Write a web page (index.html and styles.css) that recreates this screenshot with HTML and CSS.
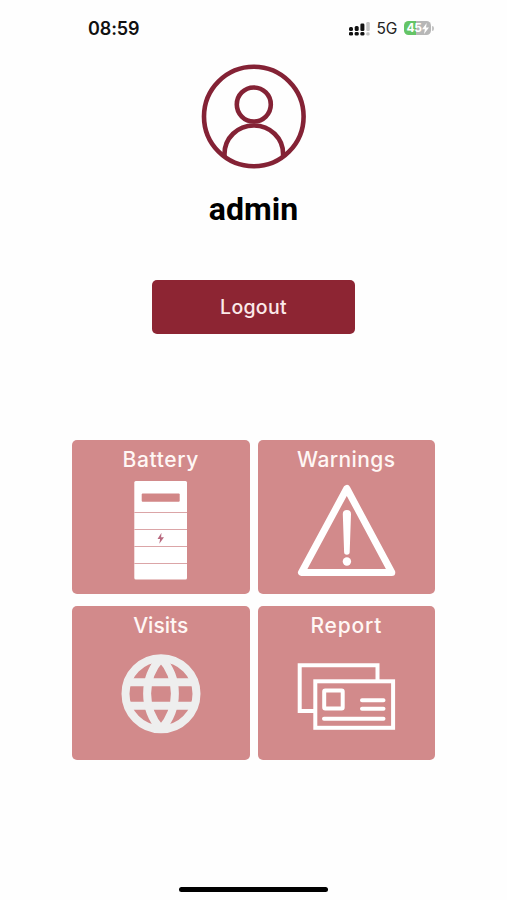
FILE: index.html
```html
<!DOCTYPE html>
<html lang="en">
<head>
<meta charset="utf-8">
<meta name="viewport" content="width=device-width, initial-scale=1">
<title>Account</title>
<link rel="stylesheet" href="styles.css">
</head>
<body>
<div class="screen">
  <header class="status">
    <span class="time">08:59</span>
    <div class="indicators">
      <svg class="signal" width="21" height="14" viewBox="0 0 21 14">
        <rect x="0" y="5" width="4" height="4" rx="1.5"/>
        <rect x="5.7" y="4" width="4" height="5" rx="1.5"/>
        <rect x="11.4" y="1.5" width="4" height="7.5" rx="1.3"/>
        <rect class="dim" x="17.3" y="0" width="3.5" height="9" rx="1.2"/>
        <rect x="0" y="10" width="4" height="3.6" rx="1.3"/>
        <rect x="5.7" y="10" width="4" height="3.6" rx="1.3"/>
        <rect x="11.4" y="10" width="4" height="3.6" rx="1.3"/>
        <rect class="dim" x="17.3" y="10.2" width="3.3" height="3.3" rx="1.2"/>
      </svg>
      <span class="network">5G</span>
      <div class="charge">
        <span class="level">45</span>
        <svg width="7" height="11" viewBox="0 0 7 11"><path d="M4.7 0 0 6.2h2.9L2 11l5-6.600H4z" fill="#fff"/></svg>
      </div>
      <i class="cap"></i>
    </div>
  </header>

  <main>
    <svg class="avatar" width="106" height="106" viewBox="0 0 106 106">
      <circle cx="52.800" cy="52.500" r="49.800"/>
      <circle cx="52.800" cy="40.500" r="17"/>
      <path d="M23.500 92.500v-2.500c0-16 13-28.500 29.300-28.500s29.300 12.500 29.300 28.500v2.500"/>
    </svg>
    <h1>admin</h1>
    <button class="logout">Logout</button>

    <nav class="tiles">
      <a class="tile">
        <span class="label battery">Battery</span>
        <svg width="177" height="115" viewBox="0 0 177 115">
          <rect x="62.300" y="3" width="52.700" height="98.500" rx="1.500" fill="#fff"/>
          <rect x="69.700" y="15.500" width="38" height="8.200" rx="1" fill="#d28787"/>
          <path d="M62.300 34.500H115M62.300 51.500H115M62.300 68.500H115M62.300 85.500H115" stroke="#dba5a7" stroke-width="1"/>
          <path d="M89.500 54.700 85.500 60.900h2.600l-.8 4.800 4.700-6.500h-2.900z" fill="#b96a80"/>
        </svg>
      </a>
      <a class="tile">
        <span class="label warnings">Warnings</span>
        <svg width="177" height="115" viewBox="0 0 177 115">
          <path d="M88.800 10.500 43.500 94.500H133.800Z" fill="none" stroke="#fff" stroke-width="7" stroke-linejoin="round"/>
          <path d="M84.800 36a4.100 4.100 0 0 1 8.200 0l-1.300 38a2.800 2.800 0 0 1-5.600 0z" fill="#fff"/>
          <circle cx="88.900" cy="83.500" r="4.200" fill="#fff"/>
        </svg>
      </a>
      <a class="tile">
        <span class="label visits">Visits</span>
        <svg width="177" height="115" viewBox="0 0 177 115">
          <g fill="none" stroke="#eee" stroke-width="8">
            <circle cx="89" cy="49.800" r="35.500"/>
            <path d="M56 38.300h66M56 61.700h66"/>
            <path d="M89 14C70.500 34 70.500 65 89 85.500M89 14c18.500 20 18.500 51 0 71.500"/>
          </g>
        </svg>
      </a>
      <a class="tile">
        <span class="label report">Report</span>
        <svg width="177" height="115" viewBox="0 0 177 115">
          <g fill="none" stroke="#fff" stroke-width="4">
            <path d="M57 67H41.700V21.300H119.500V37"/>
            <rect x="57.300" y="37.300" width="77.800" height="46.500"/>
            <rect x="66.200" y="46.500" width="18.500" height="18" rx="1"/>
            <path d="M104 56.200h21.500M104 64.700h21.500M66 74.800h59.500" stroke-linecap="round"/>
          </g>
        </svg>
      </a>
    </nav>
  </main>
  <div class="home"></div>
</div>
</body>
</html>
```
FILE: styles.css
```css
* { box-sizing: border-box; }
body { margin: 0; background: #fefefe; font-family: Inter, "Liberation Sans", sans-serif; }
.screen { width: 507px; height: 900px; display: flex; flex-direction: column; overflow: hidden; }
.status { height: 56px; padding: 0 73px 0 88px; display: flex; justify-content: space-between; align-items: center; flex: none; }
.time { padding-top: 2px; font-size: 18px; font-weight: 600; line-height: 20px; letter-spacing: -.1px; color: #111; }
.indicators { display: flex; align-items: center; }
.signal { fill: #111; margin-top: 1px; }
.signal .dim { fill: #c4c4c4; }
.network { font-size: 15.500px; line-height: 20px; margin: 2px 7px 0 7px; color: #222; letter-spacing: -.3px; }
.charge { width: 27px; height: 14px; border-radius: 4.500px; background: linear-gradient(90deg, #64c466 46%, #b7b7b7 46%); display: flex; align-items: center; justify-content: center; }
.level { color: #fff; font-size: 12px; font-weight: 700; line-height: 14px; letter-spacing: -.3px; }
.cap { width: 2px; height: 5px; margin-left: 1px; border-radius: 0 2px 2px 0; background: #c4c4c4; }
main { display: flex; flex-direction: column; align-items: center; padding-top: 8px; }
.avatar { fill: none; stroke: #842235; stroke-width: 4.600; }
h1 { margin: 19px 0 0; height: 40px; font: 700 32px/40px Roboto, sans-serif; color: #000; }
.logout { margin-top: 51px; width: 203px; height: 54px; padding: 0; border: 0; border-radius: 5px; background: #8d2533; color: #fbe9e9; font: 500 19.500px/54px Inter, sans-serif; letter-spacing: .3px; }
.tiles { display: grid; grid-template-columns: 177.500px 177.500px; grid-template-rows: 154px 154px; gap: 12px 8px; margin-top: 106px; }
.tile { display: flex; flex-direction: column; align-items: center; border-radius: 5px; background: #d28a8b; overflow: hidden; }
.tile svg { display: block; flex: none; }
.label { height: 38px; line-height: 40px; font-size: 21px; font-weight: 500; color: #fff7f5; flex: none; white-space: nowrap; }
.battery { letter-spacing: .6px; }
.warnings { letter-spacing: .4px; }
.report { letter-spacing: .8px; }
.home { width: 149px; height: 5px; margin: auto auto 8.500px; border-radius: 3px; background: #000; }
```
